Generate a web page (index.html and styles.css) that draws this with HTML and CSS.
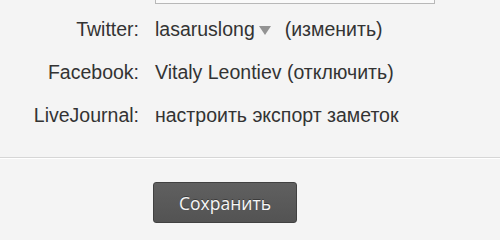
FILE: index.html
```html
<!DOCTYPE html>
<html lang="ru">
<head>
<meta charset="utf-8">
<link rel="stylesheet" href="styles.css">
</head>
<body>
<div class="page">
  <div class="input-tail"></div>
  <div class="form">
    <div class="label">Twitter:</div>
    <div class="value"><span class="account">lasaruslong</span><span class="caret"></span><span class="action">(изменить)</span></div>
    <div class="label">Facebook:</div>
    <div class="value">Vitaly Leontiev (отключить)</div>
    <div class="label">LiveJournal:</div>
    <div class="value">настроить экспорт заметок</div>
  </div>
  <div class="separator"></div>
  <div class="actions">
    <button class="save" type="button">Сохранить</button>
  </div>
</div>
</body>
</html>
```

FILE: styles.css
```css
html, body {
  margin: 0;
  padding: 0;
  background: #f4f4f4;
}

.page {
  width: 500px;
  height: 239px;
  overflow: hidden;
  font-family: "Liberation Sans", Arial, sans-serif;
  font-size: 19.5px;
  color: #333333;
}

.input-tail {
  margin-left: 155px;
  width: 278px;
  height: 3px;
  border: 1px solid #b8b8b8;
  border-top: none;
  background: #fafafa;
}

.form {
  display: grid;
  grid-template-columns: 139px 1fr;
  column-gap: 16px;
  row-gap: 20px;
  margin-top: 14px;
  line-height: 23px;
}

.label {
  text-align: right;
}

.value {
  display: flex;
  align-items: center;
  white-space: nowrap;
}

.caret {
  width: 0;
  height: 0;
  margin-left: 4px;
  margin-top: 2px;
  border-left: 6px solid transparent;
  border-right: 6px solid transparent;
  border-top: 9px solid #939393;
}

.action {
  margin-left: 14px;
}

.separator {
  margin-top: 30px;
  border-top: 1px solid #d6d6d6;
  border-bottom: 1px solid #ffffff;
}

.actions {
  padding-top: 23px;
  padding-left: 153px;
}

.save {
  display: block;
  width: 144px;
  height: 41px;
  padding: 0;
  border: 1px solid #414141;
  border-radius: 3px;
  background: linear-gradient(#606060, #535353);
  color: #f6f6f6;
  font-family: "Open Sans", "DejaVu Sans", sans-serif;
  font-size: 17.5px;
  text-shadow: 0 -1px 0 rgba(0, 0, 0, 0.35);
}
```
